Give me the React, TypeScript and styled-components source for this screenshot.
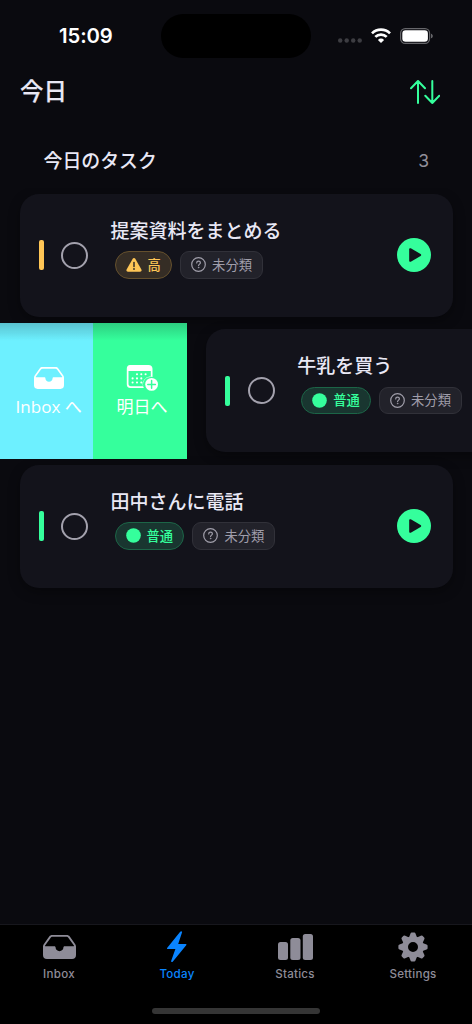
import React from "react";
import styled, { createGlobalStyle, css } from "styled-components";

const GREEN = "#35ff9c";
const AMBER = "#ffc656";
const GREY = "#8e8c98";

const GlobalStyle = createGlobalStyle`
  * { box-sizing: border-box; }
  body { margin: 0; background: #0a0a0f; }
  svg { display: block; flex: none; }
`;

const Screen = styled.div`
  width: 472px;
  height: 1024px;
  display: flex;
  flex-direction: column;
  overflow: hidden;
  background: #0a0a0f;
  color: #e9e8f5;
  font-family: Inter, "Noto Sans CJK JP", sans-serif;
`;

const StatusBar = styled.div`
  height: 71px;
  flex: none;
  display: flex;
  align-items: center;
  justify-content: space-between;
  padding: 0 39px 0 59px;
`;

const Clock = styled.div`
  width: 102px;
  font-size: 20.3px;
  font-weight: 600;
  letter-spacing: -0.1px;
  color: #fff;
`;

const Island = styled.div`
  width: 150px;
  height: 44px;
  border-radius: 22px;
  background: #000;
`;

const StatusIcons = styled.div`
  width: 122px;
  display: flex;
  align-items: center;
  justify-content: flex-end;
`;

const Header = styled.header`
  height: 41px;
  flex: none;
  display: flex;
  align-items: center;
  justify-content: space-between;
  padding: 0 32px 0 20px;
`;

const Title = styled.h1`
  margin: 0;
  padding-top: 1px;
  font-size: 23.5px;
  line-height: 36px;
  font-weight: 500;
  -webkit-text-stroke: 0.2px currentColor;
`;

const SectionHead = styled.div`
  height: 75.5px;
  flex: none;
  display: flex;
  align-items: center;
  justify-content: space-between;
  padding: 23px 43px 0 43.5px;
`;

const SectionTitle = styled.h2`
  margin: 0;
  padding-top: 1px;
  font-size: 18.9px;
  line-height: 28px;
  font-weight: 500;
`;

const Count = styled.span`
  font-size: 17.5px;
  line-height: 28px;
  color: #918f99;
`;

const List = styled.main`
  flex: 1;
  min-height: 0;
  overflow: hidden;
`;

const Row = styled.div`
  height: 135.5px;
  display: flex;
`;

const Actions = styled.div`
  width: 186.7px;
  flex: none;
  display: flex;
`;

const Action = styled.div<{ $color: string }>`
  flex: 1;
  display: flex;
  flex-direction: column;
  align-items: center;
  padding: 41px 0 0 4px;
  background: linear-gradient(rgba(10, 10, 15, 0.2), rgba(10, 10, 15, 0) 13%), ${(p) => p.$color};
  color: #fff;
`;

const ActionLabel = styled.span`
  margin-top: 3px;
  font-size: 17px;
  line-height: 24px;
  font-family: "Open Sans", "Noto Sans CJK JP", sans-serif;
  white-space: nowrap;
`;

const Card = styled.article`
  width: 433px;
  height: 123px;
  flex: none;
  display: flex;
  align-items: center;
  margin: 6px 0 0 19.5px;
  padding: 0 21.5px 0 19px;
  border-radius: 19px;
  background: #13131b;
  box-shadow: 0 4px 12px rgba(0, 0, 0, 0.35);
`;

const PriorityBar = styled.span<{ $color: string }>`
  width: 5px;
  height: 30px;
  border-radius: 2px;
  background: ${(p) => p.$color};
`;

const Check = styled.span`
  width: 27px;
  height: 27px;
  margin-left: 17.5px;
  border: 2px solid #a3a1ad;
  border-radius: 50%;
`;

const Body = styled.div`
  flex: 1;
  height: 100%;
  margin-left: 22.5px;
  padding-top: 23px;
`;

const TaskTitle = styled.div`
  height: 29px;
  font-size: 19px;
  line-height: 29px;
  font-weight: 500;
  white-space: nowrap;
`;

const Chips = styled.div`
  display: flex;
  gap: 8.5px;
  margin: 5.5px 0 0 4px;
`;

type ChipTone = "high" | "normal" | "none";

const tones = {
  high: css`
    border: 1px solid #65502d;
    border-radius: 14px;
    background: #352d25;
    color: ${AMBER};
    font-weight: 500;
  `,
  normal: css`
    border: 1px solid #1c6547;
    border-radius: 14px;
    background: #193630;
    color: ${GREEN};
    font-weight: 500;
  `,
  none: css`
    border: 1px solid #313139;
    border-radius: 9px;
    background: #22222a;
    color: #a09eaa;
  `,
};

const Chip = styled.span<{ $tone: ChipTone }>`
  height: 27.5px;
  display: flex;
  align-items: center;
  gap: 6px;
  padding: 0 9.8px 0 10px;
  font-size: 13.3px;
  line-height: 20px;
  white-space: nowrap;
  ${(p) => tones[p.$tone]}
`;

const TabBar = styled.nav`
  height: 100px;
  flex: none;
  display: flex;
  flex-direction: column;
  align-items: center;
  border-top: 1px solid #17171d;
  background: #000;
`;

const Tabs = styled.div`
  width: 100%;
  height: 83px;
  display: flex;
`;

const Tab = styled.div<{ $active?: boolean }>`
  flex: 1;
  display: flex;
  flex-direction: column;
  align-items: center;
  padding-top: 5px;
  color: ${(p) => (p.$active ? "#0a84ff" : GREY)};
  font-size: 11.6px;
  line-height: 16px;
  font-weight: 500;
  letter-spacing: 0.25px;
`;

const TabIcon = styled.div`
  height: 33px;
  margin-bottom: 3px;
  display: flex;
  align-items: center;
`;

const HomeIndicator = styled.div`
  width: 168px;
  height: 6px;
  border-radius: 3px;
  background: #353535;
`;

const TrayIcon = ({ width, height }: { width: number; height: number }) => (
  <svg width={width} height={height} viewBox="0 0 33 24" fill="currentColor">
    <path fillRule="evenodd" d="M9.300 0h14.400c1.300 0 2.300.5 3.100 1.500l5.100 7.200c.8 1 1.100 1.900 1.100 3.100v8.300c0 2.600-1.400 3.900-4 3.900H4c-2.600 0-4-1.300-4-3.900v-8.300c0-1.200.3-2.100 1.100-3.100l5.100-7.200C7 .5 8 0 9.300 0Zm.2 1.800c-.8 0-1.300.2-1.800.9L2.100 10.400c-.3.5-.1.8.4.8h8.800c.9 0 1.300.6 1.300 1.400 0 2 1.700 3.600 3.900 3.600s3.900-1.600 3.900-3.600c0-.8.4-1.400 1.300-1.400h8.800c.5 0 .7-.3.4-.8l-5.600-7.700c-.5-.7-1-.9-1.800-.9Z" />
  </svg>
);

const CalendarIcon = () => (
  <svg width="33" height="28" viewBox="0 0 33 28">
    <path d="M4 1h18.500C25 1 26.500 2.400 26.500 4.800v8.100a7.500 7.500 0 0 0-8.600 11.100H4.500C2 24 .8 22.800.8 20.300V4.800C.8 2.400 2 1 4 1Zm-1.500 6v12.800c0 1.700.8 2.400 2.400 2.400h12.300a7.500 7.500 0 0 1 7.600-9.300V7Z" fill="#fff" fillRule="evenodd" />
    <g fill="#fff">
      {[[11, 10.3], [15.3, 10.3], [19.6, 10.3], [6.6, 14.4], [11, 14.4], [15.3, 14.4], [6.6, 18.5], [11, 18.5], [15.3, 18.5]].map(([x, y]) => (
        <circle key={`${x}-${y}`} cx={x} cy={y} r="1.050" />
      ))}
    </g>
    <circle cx="25.600" cy="20.400" r="6.400" fill="#fff" />
    <path d="M25.600 16.600v7.600M21.800 20.400h7.600" stroke={GREEN} strokeWidth="1.500" strokeLinecap="round" />
  </svg>
);

const DotsSvg = styled.svg`
  margin-top: 10px;
`;

const SpacedSvg = styled.svg`
  margin-left: 9px;
`;

const SignalDots = () => (
  <DotsSvg width="24" height="5" viewBox="0 0 24 5" fill="#3d3d42">
    {[2.2, 8.7, 15.2, 21.7].map((x) => (
      <circle key={x} cx={x} cy="2.5" r="2.200" />
    ))}
  </DotsSvg>
);

const WifiIcon = () => (
  <SpacedSvg width="20" height="15" viewBox="0 0 20 15" fill="none" stroke="#fff" strokeWidth="2.700">
    <path d="M1 5.400a12.800 12.800 0 0 1 18 0" />
    <path d="M4.300 8.900a8.100 8.100 0 0 1 11.400 0" />
    <path d="M10 15 6.900 11.900a4.400 4.400 0 0 1 6.200 0Z" fill="#fff" stroke="none" />
  </SpacedSvg>
);

const BatteryIcon = () => (
  <SpacedSvg width="33" height="16" viewBox="0 0 33 16">
    <rect x=".6" y=".6" width="29" height="14.800" rx="4.600" fill="none" stroke="#66666a" strokeWidth="1.200" />
    <rect x="2.300" y="2.300" width="25.600" height="11.400" rx="3.200" fill="#fff" />
    <path d="M31 5.700c1.200.4 1.800 1.200 1.800 2.300s-.6 1.900-1.800 2.300Z" fill="#66666a" />
  </SpacedSvg>
);

const SortIcon = () => (
  <svg width="30" height="24" viewBox="0 0 30 24" fill="none" stroke={GREEN} strokeWidth="2" strokeLinecap="round" strokeLinejoin="round">
    <path d="M8 23V1M1 8.200 8 1l7 7.200M22.300 1v22M15.300 15.800l7 7.200 7-7.200" />
  </svg>
);

const WarningIcon = () => (
  <svg width="16" height="14" viewBox="0 0 16 14">
    <path d="M6.700.8c.6-1 2-1 2.600 0l6.100 10.600c.6 1.100-.1 2.300-1.300 2.300H1.900C.7 13.700 0 12.500.6 11.400Z" fill={AMBER} />
    <path d="M8 4.500v4" stroke="#352d25" strokeWidth="1.500" strokeLinecap="round" />
    <circle cx="8" cy="11" r=".9" fill="#352d25" />
  </svg>
);

const DotIcon = () => (
  <svg width="15" height="15" viewBox="0 0 15 15">
    <circle cx="7.500" cy="7.500" r="7.300" fill={GREEN} />
  </svg>
);

const QuestionIcon = () => (
  <svg width="15" height="15" viewBox="0 0 15 15" fill="none" stroke="#a09eaa" strokeWidth="1.200" strokeLinecap="round">
    <circle cx="7.500" cy="7.500" r="6.800" />
    <path d="M5.700 5.900c0-1.100.8-1.700 1.800-1.700s1.900.6 1.900 1.600c0 1.300-1.800 1.400-1.800 2.800" />
    <circle cx="7.550" cy="10.600" r=".35" fill="#a09eaa" strokeWidth=".7" />
  </svg>
);

const PlayIcon = () => (
  <svg width="34" height="34" viewBox="0 0 34 34">
    <circle cx="17" cy="17" r="17" fill={GREEN} />
    <path d="M12.200 11.200c0-.9.8-1.300 1.600-.9l9.800 5.700c.8.500.8 1.500 0 2l-9.800 5.700c-.8.400-1.600 0-1.600-.9Z" fill="#13131b" />
  </svg>
);

const BoltIcon = () => (
  <svg width="22" height="32" viewBox="0 0 22 32" fill="currentColor">
    <path d="M14.200.7 1.300 16.700c-.5.700-.3 1.300.5 1.300h7.600L5.300 29.600c-.5 1.500.7 2 1.600.9L20.200 14.200c.6-.7.3-1.300-.5-1.300h-7.500L16 1.600C16.400.2 15.100-.4 14.200.7Z" />
  </svg>
);

const BarsIcon = () => (
  <svg width="35" height="26" viewBox="0 0 35 26" fill="currentColor">
    <rect x="0" y="8" width="10" height="18" rx="2.500" />
    <rect x="12.300" y="4" width="10.200" height="22" rx="2.500" />
    <rect x="24.800" y="0" width="10.200" height="26" rx="2.500" />
  </svg>
);

const GearIcon = () => (
  <svg width="30" height="30" viewBox="-15 -15 30 30" fill="currentColor">
    <path fillRule="evenodd" d="M-10.800 0a10.800 10.800 0 1 0 21.600 0a10.800 10.800 0 1 0-21.600 0ZM-5 0a5 5 0 1 1 10 0a5 5 0 1 1-10 0Z" />
    {[0, 45, 90, 135, 180, 225, 270, 315].map((a) => (
      <path key={a} transform={`rotate(${a})`} d="M-4-9.500-2.500-13.500q.3-1.100 1.300-1.100h2.400q1 0 1.300 1.100L4-9.500Z" />
    ))}
  </svg>
);

const priorities = {
  high: { color: AMBER, label: "高", icon: <WarningIcon /> },
  normal: { color: GREEN, label: "普通", icon: <DotIcon /> },
};

const TaskCard = ({ title, priority }: { title: string; priority: "high" | "normal" }) => {
  const { color, label, icon } = priorities[priority];
  return (
    <Card>
      <PriorityBar $color={color} />
      <Check />
      <Body>
        <TaskTitle>{title}</TaskTitle>
        <Chips>
          <Chip $tone={priority}>{icon}{label}</Chip>
          <Chip $tone="none"><QuestionIcon />未分類</Chip>
        </Chips>
      </Body>
      <PlayIcon />
    </Card>
  );
};

export default function App() {
  return (
    <Screen>
      <GlobalStyle />
      <StatusBar>
        <Clock>15:09</Clock>
        <Island />
        <StatusIcons>
          <SignalDots />
          <WifiIcon />
          <BatteryIcon />
        </StatusIcons>
      </StatusBar>
      <Header>
        <Title>今日</Title>
        <SortIcon />
      </Header>
      <SectionHead>
        <SectionTitle>今日のタスク</SectionTitle>
        <Count>3</Count>
      </SectionHead>
      <List>
        <Row>
          <TaskCard title="提案資料をまとめる" priority="high" />
        </Row>
        <Row>
          <Actions>
            <Action $color="#6df0ff">
              <TrayIcon width={30} height={28} />
              <ActionLabel>Inbox へ</ActionLabel>
            </Action>
            <Action $color={GREEN}>
              <CalendarIcon />
              <ActionLabel>明日へ</ActionLabel>
            </Action>
          </Actions>
          <TaskCard title="牛乳を買う" priority="normal" />
        </Row>
        <Row>
          <TaskCard title="田中さんに電話" priority="normal" />
        </Row>
      </List>
      <TabBar>
        <Tabs>
          <Tab><TabIcon><TrayIcon width={33} height={24} /></TabIcon>Inbox</Tab>
          <Tab $active><TabIcon><BoltIcon /></TabIcon>Today</Tab>
          <Tab><TabIcon><BarsIcon /></TabIcon>Statics</Tab>
          <Tab><TabIcon><GearIcon /></TabIcon>Settings</Tab>
        </Tabs>
        <HomeIndicator />
      </TabBar>
    </Screen>
  );
}
